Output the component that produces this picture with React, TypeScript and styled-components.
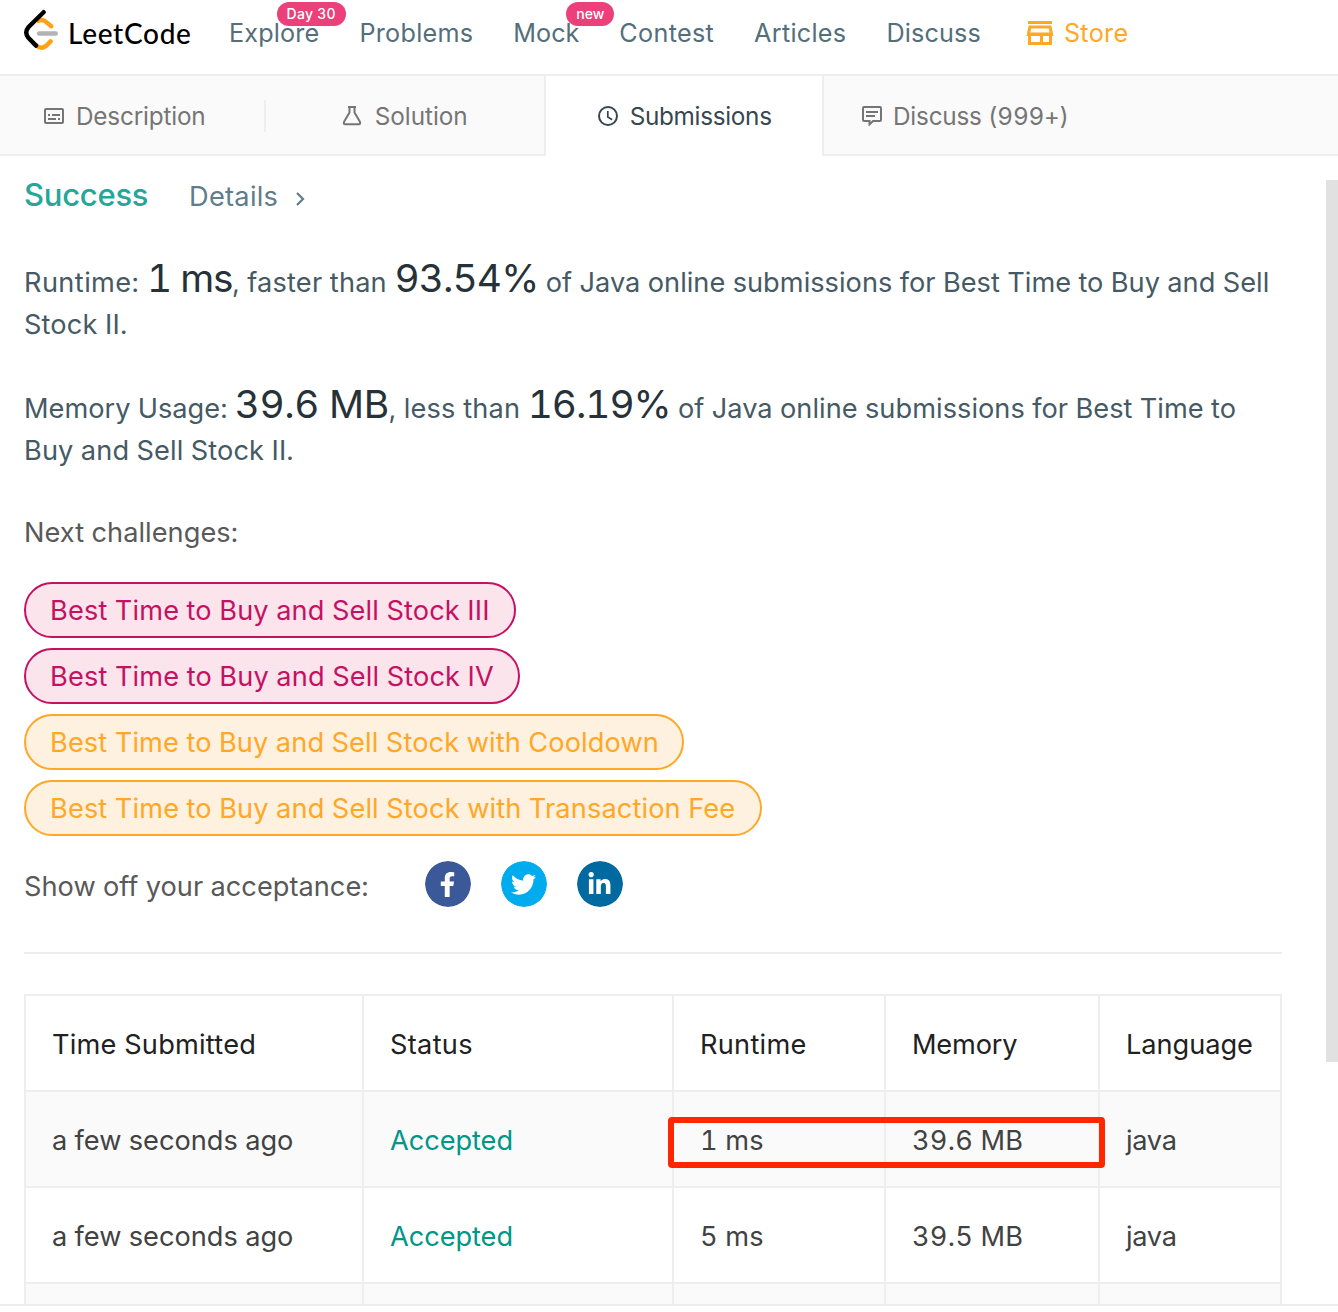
import React from 'react';
import styled, { createGlobalStyle } from 'styled-components';
import { FaFacebookF, FaTwitter, FaLinkedinIn } from 'react-icons/fa';

const GlobalStyle = createGlobalStyle`
  *, *::before, *::after { box-sizing: border-box; }
  body {
    margin: 0;
    background: #fff;
    font-family: Inter, "Liberation Sans", sans-serif;
    font-variant-numeric: tabular-nums;
    overflow: hidden;
  }
`;

const Page = styled.div`
  width: 1338px;
  height: 1312px;
  display: flex;
  flex-direction: column;
  background: #fff;
`;

/* ---------- top navigation ---------- */
const Header = styled.header`
  height: 76px;
  flex: none;
  display: flex;
  align-items: center;
  padding: 0 0 8px 22px;
  border-bottom: 2px solid #eee;
`;

const Brand = styled.a`
  display: flex;
  align-items: center;
  width: 207px;

  svg {
    margin-bottom: 6px;
  }
`;

const Wordmark = styled.span`
  margin-left: 8px;
  font: 500 28px/40px Lato, sans-serif;
  letter-spacing: 0.7px;
  color: #000;
`;

const Nav = styled.nav`
  display: flex;
  align-items: center;
  gap: 40px;
`;

const NavLink = styled.a<{ $ls?: number; $store?: boolean }>`
  position: relative;
  display: flex;
  align-items: center;
  font-size: 25.2px;
  line-height: 32px;
  white-space: nowrap;
  letter-spacing: ${p => p.$ls ?? 0.17}px;
  color: ${p => (p.$store ? '#ffa726' : '#546e7a')};
  margin-left: ${p => (p.$store ? '5px' : 0)};
  gap: 10px;
`;

const Badge = styled.span<{ $left: number; $width: number; $ls: number }>`
  position: absolute;
  top: -15px;
  left: ${p => p.$left}px;
  width: ${p => p.$width}px;
  height: 24px;
  border-radius: 12px;
  background: #ec407a;
  color: #fff;
  text-align: center;
  font-size: 14px;
  font-weight: 500;
  line-height: 24px;
  letter-spacing: ${p => p.$ls}px;
`;

/* ---------- tabs ---------- */
const Tabs = styled.div`
  height: 80px;
  flex: none;
  display: flex;
`;

const Tab = styled.div<{ $width?: number; $pad: number; $ls: number; $active?: boolean; $gap: number }>`
  ${p => (p.$width ? `width: ${p.$width}px; flex: none;` : 'flex: 1;')}
  display: flex;
  align-items: center;
  gap: ${p => p.$gap}px;
  padding-top: ${p => (p.$active ? 0 : 2)}px;
  padding-left: ${p => p.$pad}px;
  font-size: 24.3px;
  letter-spacing: ${p => p.$ls}px;
  white-space: nowrap;
  background: ${p => (p.$active ? '#fff' : '#fafafa')};
  color: ${p => (p.$active ? '#37474f' : '#757575')};
  border: 0 solid #eee;
  border-bottom-width: ${p => (p.$active ? 0 : 2)}px;
`;

const TabEdge = styled.div`
  width: 2px;
  flex: none;
  background: #eee;
`;

const TabDivider = styled.div`
  width: 2px;
  flex: none;
  display: flex;
  align-items: center;
  padding-top: 2px;
  background: #fafafa;
  border-bottom: 2px solid #eee;

  &::before {
    content: '';
    width: 2px;
    height: 32px;
    background: #eee;
  }
`;

/* ---------- scroll area ---------- */
const ScrollArea = styled.div`
  height: 1150px;
  flex: none;
  display: flex;
  justify-content: space-between;
  overflow: hidden;
  border-bottom: 2px solid #eee;
`;

const ScrollThumb = styled.div`
  width: 12px;
  height: 882px;
  margin-top: 24px;
  background: #e1e1e1;
`;

const Content = styled.main`
  width: 1282px;
  padding: 18px 0 0 24px;
`;

const ResultHead = styled.div`
  display: flex;
  align-items: baseline;
  height: 42px;
  line-height: 42px;
`;

const ResultStatus = styled.span`
  font-size: 31px;
  font-weight: 500;
  letter-spacing: -0.25px;
  color: #26a69a;
  width: 165px;
`;

const DetailsLink = styled.a`
  display: flex;
  align-items: baseline;
  font-size: 27.2px;
  letter-spacing: 0.28px;
  color: #607d8b;
  gap: 18px;

  svg {
    margin-bottom: 1px;
  }
`;

const Stats = styled.section`
  padding-top: 46px;
`;

const Stat = styled.p`
  margin: 0 0 42px;
  font-size: 27.2px;
  line-height: 42px;
  white-space: nowrap;
  color: #455a64;
`;

const Piece = styled.span<{ $ls: number }>`
  letter-spacing: ${p => p.$ls}px;
`;

const Figure = styled.span<{ $ls: number }>`
  font-size: 38.8px;
  line-height: 0;
  letter-spacing: ${p => p.$ls}px;
  color: #263238;
`;

const Label = styled.div<{ $ls: number }>`
  font-size: 27.2px;
  line-height: 42px;
  letter-spacing: ${p => p.$ls}px;
  color: #595959;
`;

const Challenges = styled.div`
  margin: -2px 0 29px;
`;

const ChallengeList = styled.div`
  display: flex;
  flex-direction: column;
  align-items: flex-start;
  gap: 10px;
  margin-top: 28px;
`;

const Pill = styled.a<{ $hard?: boolean; $ls: number; $width: number }>`
  width: ${p => p.$width}px;
  height: 56px;
  padding: 1px 24px 0;
  border: 2px solid ${p => (p.$hard ? '#c51162' : '#ffa726')};
  border-radius: 28px;
  background: ${p => (p.$hard ? '#fce4ec' : '#fff1df')};
  color: ${p => (p.$hard ? '#c51162' : '#ffa726')};
  font-size: 27.2px;
  line-height: 52px;
  letter-spacing: ${p => p.$ls}px;
  white-space: nowrap;
`;

const ShareRow = styled.div`
  display: flex;
  align-items: center;
  height: 48px;
  margin-top: -5px;
`;

const ShareLabel = styled(Label)`
  width: 400px;
  padding-top: 6px;
`;

const ShareIcons = styled.div`
  display: flex;
  gap: 28px;
`;

const ShareButton = styled.a<{ $bg: string }>`
  width: 48px;
  height: 48px;
  border: 0.5px solid #fff;
  border-radius: 50%;
  background: ${p => p.$bg};
  background-clip: padding-box;
  color: #fff;
  display: flex;
  align-items: center;
  justify-content: center;

  svg {
    margin-right: 1px;
  }
`;

const Rule = styled.div`
  height: 2px;
  width: 1258px;
  margin: 44px 0 40px;
  background: #eee;
`;

/* ---------- submissions table ---------- */
const Table = styled.div`
  position: relative;
  width: 1258px;
  border-top: 2px solid #eee;
  border-right: 2px solid #eee;
`;

const Row = styled.div<{ $shade?: boolean }>`
  display: grid;
  grid-template-columns: 338px 310px 212px 214px 1fr;
  height: 96px;
  background: ${p => (p.$shade ? '#fafafa' : '#fff')};
`;

const Cell = styled.div<{ $tone?: 'head' | 'ok'; $ls?: number }>`
  border-left: 2px solid #eee;
  border-bottom: 2px solid #eee;
  padding: 4px 0 0 26px;
  font-size: 27.2px;
  line-height: 90px;
  white-space: nowrap;
  letter-spacing: ${p => p.$ls ?? 0}px;
  color: ${p => (p.$tone === 'head' ? '#212121' : p.$tone === 'ok' ? '#009688' : '#424242')};
`;

const Highlight = styled.div`
  position: absolute;
  left: 643.5px;
  top: 121px;
  width: 437.5px;
  height: 51px;
  border: 6px solid #ff2600;
  border-radius: 4px;
`;

const Logo = () => (
  <svg width="38" height="44" viewBox="22 8 38 44" fill="none" strokeWidth="4.4" strokeLinecap="round">
    <path d="M38.5 20.8Q42.3 18.8 45.6 21.6L51.3 26.2" stroke="#ffa116" />
    <path d="M36 45.2Q41 50 46.2 45.8L50.6 41.4" stroke="#ffa116" />
    <path d="M39 33.5H55.8" stroke="#b3b3b3" />
    <path d="M43.6 12.2L28.6 27Q24 32.6 28.4 37.8L36 45.6" stroke="#000" />
  </svg>
);

const StoreIcon = () => (
  <svg width="28" height="24" viewBox="0 0 28 24" fill="currentColor" fillRule="evenodd">
    <path d="M2 0h24v3H2z" />
    <path d="M2.6 4.4h22.8L27.4 15H.6zM5.2 7.6L4.4 11.6h19.2l-.8-4z" />
    <path d="M2 14h24v10H2zM5 15v6h9v-6zM17 15v6h6v-6z" />
  </svg>
);

const DescriptionIcon = () => (
  <svg width="20" height="20" viewBox="0 0 20 20" fill="none" stroke="currentColor" strokeWidth="2">
    <rect x="1" y="3" width="18" height="14" rx="1" />
    <path d="M4 9h2M8 9h8M4 13h8M14 13h2" strokeWidth="1.8" />
  </svg>
);

const FlaskIcon = () => (
  <svg width="20" height="20" viewBox="0 0 20 20" fill="none" stroke="currentColor" strokeWidth="2">
    <path d="M6 1h8M7.5 1v5.5L2.2 15.6Q1 18.2 3.4 18.2H16.6Q19 18.2 17.8 15.6L12.5 6.5V1" strokeLinejoin="round" />
  </svg>
);

const ClockIcon = () => (
  <svg width="20" height="20" viewBox="0 0 20 20" fill="none" stroke="currentColor" strokeWidth="2">
    <circle cx="10" cy="10" r="9" />
    <path d="M9.8 5v6l4.4 2.7" strokeWidth="1.7" />
  </svg>
);

const CommentIcon = () => (
  <svg width="20" height="20" viewBox="0 0 20 20" fill="none" stroke="currentColor" strokeWidth="2">
    <path d="M2 1H18Q19 1 19 2V14Q19 15 18 15H11L7.5 18.4V15H2Q1 15 1 14V2Q1 1 2 1Z" />
    <path d="M4 6h12M4 10h9" strokeWidth="1.8" />
  </svg>
);

const Chevron = () => (
  <svg width="9" height="14" viewBox="0 0 9 14" fill="none" stroke="currentColor" strokeWidth="2.2">
    <path d="M1 1l6 6-6 6" />
  </svg>
);

const submissions = [
  { runtime: '1 ms', memory: '39.6 MB' },
  { runtime: '5 ms', memory: '39.5 MB' },
];

export default function App() {
  return (
    <Page>
      <GlobalStyle />
      <Header>
        <Brand>
          <Logo />
          <Wordmark>LeetCode</Wordmark>
        </Brand>
        <Nav>
          <NavLink>Explore<Badge $left={48} $width={68.5} $ls={0.25}>Day 30</Badge></NavLink>
          <NavLink $ls={0.25}>Problems</NavLink>
          <NavLink $ls={0}>Mock<Badge $left={53} $width={48} $ls={0}>new</Badge></NavLink>
          <NavLink $ls={0.3}>Contest</NavLink>
          <NavLink $ls={0.28}>Articles</NavLink>
          <NavLink $ls={0.15}>Discuss</NavLink>
          <NavLink $store $ls={0.3}><StoreIcon />Store</NavLink>
        </Nav>
      </Header>

      <Tabs>
        <Tab $width={264} $pad={44} $gap={12} $ls={-0.18}><DescriptionIcon />Description</Tab>
        <TabDivider />
        <Tab $width={278} $pad={76} $gap={12.7} $ls={-0.03}><FlaskIcon />Solution</Tab>
        <TabEdge />
        <Tab $width={276} $pad={52} $gap={11.7} $ls={-0.3} $active><ClockIcon />Submissions</Tab>
        <TabEdge />
        <Tab $pad={38} $gap={11} $ls={-0.2}><CommentIcon />Discuss (999+)</Tab>
      </Tabs>

      <ScrollArea>
        <Content>
          <ResultHead>
            <ResultStatus>Success</ResultStatus>
            <DetailsLink>Details<Chevron /></DetailsLink>
          </ResultHead>

          <Stats>
            <Stat>
              <Piece $ls={0.4}>Runtime: </Piece>
              <Figure $ls={-1.2}>1 ms</Figure>
              <Piece $ls={0.19}>, faster than </Piece>
              <Figure $ls={-0.85}>93.54%</Figure>
              <Piece $ls={0.025}> of Java online submissions for Best Time to Buy and Sell</Piece>
              <br />
              <Piece $ls={0.15}>Stock II.</Piece>
            </Stat>
            <Stat>
              <Piece $ls={0}>Memory Usage: </Piece>
              <Figure $ls={-0.4}>39.6 MB</Figure>
              <Piece $ls={0.2}>, less than </Piece>
              <Figure $ls={-1.05}>16.19%</Figure>
              <Piece $ls={0.035}> of Java online submissions for Best Time to</Piece>
              <br />
              <Piece $ls={0.1}>Buy and Sell Stock II.</Piece>
            </Stat>
          </Stats>

          <Challenges>
            <Label $ls={0.035}>Next challenges:</Label>
            <ChallengeList>
              <Pill $hard $width={492} $ls={0.13}>Best Time to Buy and Sell Stock III</Pill>
              <Pill $hard $width={496} $ls={0.14}>Best Time to Buy and Sell Stock IV</Pill>
              <Pill $width={660} $ls={0.11}>Best Time to Buy and Sell Stock with Cooldown</Pill>
              <Pill $width={738} $ls={0.125}>Best Time to Buy and Sell Stock with Transaction Fee</Pill>
            </ChallengeList>
          </Challenges>

          <ShareRow>
            <ShareLabel $ls={0.02}>Show off your acceptance:</ShareLabel>
            <ShareIcons>
              <ShareButton $bg="#3b5998"><FaFacebookF size={25} /></ShareButton>
              <ShareButton $bg="#00aced"><FaTwitter size={25} /></ShareButton>
              <ShareButton $bg="#0069a0"><FaLinkedinIn size={25} /></ShareButton>
            </ShareIcons>
          </ShareRow>

          <Rule />

          <Table>
            <Row>
              <Cell $tone="head" $ls={0.22}>Time Submitted</Cell>
              <Cell $tone="head" $ls={0.3}>Status</Cell>
              <Cell $tone="head" $ls={0.26}>Runtime</Cell>
              <Cell $tone="head" $ls={-0.2}>Memory</Cell>
              <Cell $tone="head" $ls={-0.05}>Language</Cell>
            </Row>
            {submissions.map((s, i) => (
              <Row key={s.runtime} $shade={i % 2 === 0}>
                <Cell $ls={0}>a few seconds ago</Cell>
                <Cell $tone="ok" $ls={-0.06}>Accepted</Cell>
                <Cell $ls={0.2}>{s.runtime}</Cell>
                <Cell $ls={0.2}>{s.memory}</Cell>
                <Cell $ls={-0.3}>java</Cell>
              </Row>
            ))}
            <Row $shade><Cell /><Cell /><Cell /><Cell /><Cell /></Row>
            <Highlight />
          </Table>
        </Content>
        <ScrollThumb />
      </ScrollArea>
    </Page>
  );
}
